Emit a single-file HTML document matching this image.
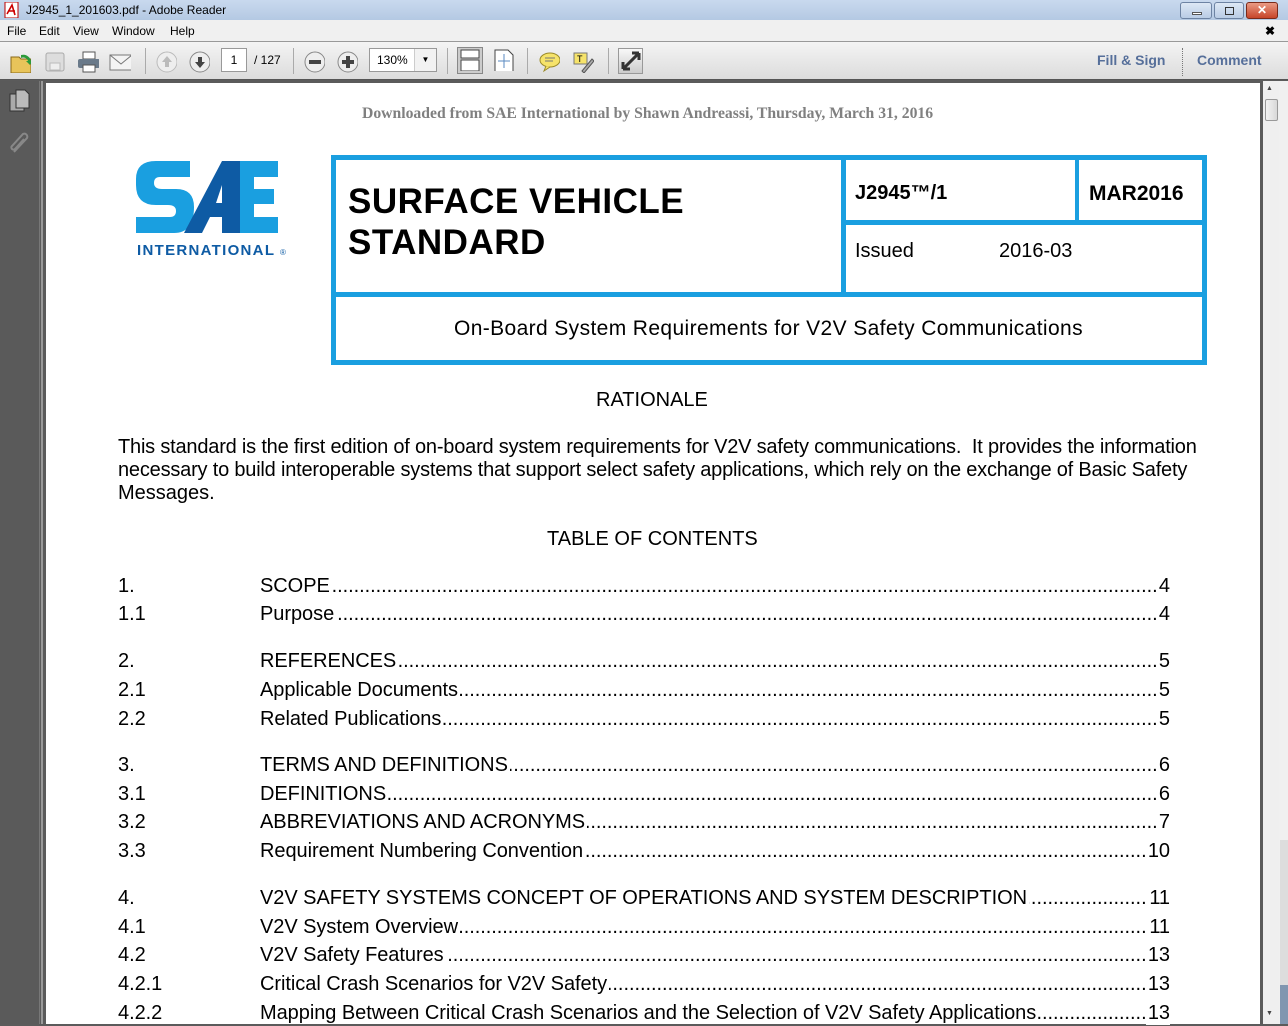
<!DOCTYPE html>
<html><head><meta charset="utf-8"><style>
*{margin:0;padding:0;box-sizing:border-box}
body{width:1288px;height:1024px;overflow:hidden;position:relative;font-family:"Liberation Sans",sans-serif;background:#5b5b5b}
.a{position:absolute}
#title{left:0;top:0;width:1288px;height:20px;background:linear-gradient(#c9d9ee,#b4c9e3);font-size:12px;color:#000;padding:3px 0 0 26px}
#menu{left:0;top:20px;width:1288px;height:22px;background:#f0f0f0;font-size:12px;border-bottom:1px solid #999}
#menu span{position:absolute;top:4px}
#tb{left:0;top:42px;width:1288px;height:38px;background:linear-gradient(#f4f4f4,#dcdcdc);border-bottom:1px solid #555}
.ic{position:absolute;top:9px;width:22px;height:22px}
.sep{position:absolute;top:6px;width:1px;height:26px;background:#aaa}
#page{left:46px;top:83px;width:1214px;height:941px;background:#fff}
.p{position:absolute;font-size:20px;color:#000;white-space:nowrap}
.row{position:absolute;left:118px;width:1052px;height:24px;font-size:20px;white-space:nowrap;letter-spacing:-0.05px}
.row .n{position:absolute;left:0}
.row .t{position:absolute;left:142px;right:0;overflow:hidden;z-index:0}
.row .t span{background:#fff;padding-right:2px;position:relative;z-index:1}
.row .t::after{content:"........................................................................................................................................................................................................................................................................................";position:absolute;left:0;z-index:-1}
.row .pg{position:absolute;right:0;background:#fff;padding-left:2px;z-index:2}
.bl{background:#1a9fe0;position:absolute}
</style></head><body>
<div id="title" class="a"><svg class="a" style="left:4px;top:2px" width="16" height="16"><rect x="1" y="0" width="13" height="16" fill="#fff" stroke="#b00"/><path d="M3 12 L8 3 L11 13 M4 9 H11" stroke="#c00" stroke-width="1.6" fill="none"/></svg>J2945_1_201603.pdf - Adobe Reader
<div class="a" style="left:1180px;top:2px;width:32px;height:17px;border:1px solid #6d83a3;border-radius:3px;background:linear-gradient(#dde8f5,#b9cce5)"><div class="a" style="left:11px;top:9px;width:10px;height:3px;background:#fff;border:1px solid #555"></div></div>
<div class="a" style="left:1214px;top:2px;width:30px;height:17px;border:1px solid #6d83a3;border-radius:3px;background:linear-gradient(#dde8f5,#b9cce5)"><div class="a" style="left:10px;top:4px;width:9px;height:8px;border:1px solid #333"></div></div>
<div class="a" style="left:1246px;top:2px;width:32px;height:17px;border:1px solid #7a2a1a;border-radius:3px;background:linear-gradient(#e99a84,#c7452a);color:#fff;font-size:12px;font-weight:bold;text-align:center;line-height:15px">✕</div>
</div>
<div id="menu" class="a"><span style="left:7px">File</span><span style="left:39px">Edit</span><span style="left:73px">View</span><span style="left:112px">Window</span><span style="left:170px">Help</span><span style="left:1265px;font-weight:bold">✖</span></div>
<div id="tb" class="a">
<svg class="ic" style="left:9px" width="26" height="24"><path d="M2 6h8l2 2h10v14H2z" fill="#e8c45a" stroke="#8a6a1a"/><path d="M12 4a8 8 0 0 1 10 6l2-1-3 5-4-4 2 0a5 5 0 0 0-7-3z" fill="#2a9a3a"/></svg>
<svg class="ic" style="left:44px" width="22" height="22"><rect x="2" y="2" width="18" height="18" rx="2" fill="#ddd" stroke="#aaa"/><rect x="6" y="12" width="10" height="7" fill="#eee" stroke="#bbb"/></svg>
<svg class="ic" style="left:77px" width="24" height="22"><rect x="6" y="1" width="12" height="7" fill="#fff" stroke="#555"/><rect x="1" y="8" width="22" height="9" rx="2" fill="#6a7a8a"/><rect x="6" y="14" width="12" height="7" fill="#fff" stroke="#555"/></svg>
<svg class="ic" style="left:109px" width="24" height="22"><rect x="1" y="4" width="22" height="15" fill="#f4f4f4" stroke="#777"/><path d="M1 4l11 9 11-9" stroke="#777" fill="none"/></svg>
<div class="sep" style="left:145px"></div>
<svg class="ic" style="left:155px" width="24" height="24"><circle cx="12" cy="11" r="10" fill="#eee" stroke="#bbb"/><path d="M12 5l5 6h-3v5h-4v-5H7z" fill="#bbb"/></svg>
<svg class="ic" style="left:188px" width="24" height="24"><circle cx="12" cy="11" r="10" fill="#eee" stroke="#888"/><path d="M12 17l5-6h-3V6h-4v5H7z" fill="#444"/></svg>
<div class="a" style="left:221px;top:6px;width:26px;height:24px;background:#fff;border:1px solid #999;font-size:12px;text-align:center;line-height:22px">1</div>
<div class="a" style="left:254px;top:11px;font-size:12px">/ 127</div>
<div class="sep" style="left:293px"></div>
<svg class="ic" style="left:303px" width="24" height="24"><circle cx="12" cy="11" r="10" fill="#eee" stroke="#888"/><rect x="6" y="9" width="12" height="4" fill="#444"/></svg>
<svg class="ic" style="left:336px" width="24" height="24"><circle cx="12" cy="11" r="10" fill="#eee" stroke="#888"/><path d="M6 9h4V5h4v4h4v4h-4v4h-4v-4H6z" fill="#444"/></svg>
<div class="a" style="left:369px;top:6px;width:68px;height:24px;background:#fff;border:1px solid #999;font-size:12px;line-height:22px;padding-left:7px">130%<div class="a" style="left:44px;top:0;width:22px;height:22px;border-left:1px solid #ccc;background:#f2f2f2;font-size:8px;text-align:center">▼</div></div>
<div class="sep" style="left:447px"></div>
<div class="a" style="left:457px;top:5px;width:26px;height:27px;background:#ccc;border:1px solid #888"></div>
<svg class="ic" style="left:460px;top:7px" width="20" height="24"><rect x="1" y="1" width="18" height="8" fill="#fff" stroke="#444"/><rect x="1" y="11" width="18" height="11" fill="#fff" stroke="#444"/></svg>
<svg class="ic" style="left:494px;top:7px" width="20" height="24"><path d="M1 1h13l5 5v17H1z" fill="#fff" stroke="#444"/><path d="M10 5v14M4 12h12" stroke="#5a8ac0"/></svg>
<div class="sep" style="left:527px"></div>
<svg class="ic" style="left:538px" width="24" height="22"><ellipse cx="12" cy="9" rx="10" ry="7" fill="#f6e36a" stroke="#9a8a2a"/><path d="M8 15l-2 5 6-4" fill="#f6e36a" stroke="#9a8a2a"/><path d="M7 7h10M7 10h8" stroke="#777"/></svg>
<svg class="ic" style="left:572px" width="24" height="22"><rect x="2" y="2" width="13" height="11" fill="#f6e36a" stroke="#777"/><text x="5" y="11" font-size="9" font-family="Liberation Sans">T</text><path d="M10 20l10-12 2 2-10 12z" fill="#aaa" stroke="#555"/></svg>
<div class="sep" style="left:608px"></div>
<div class="a" style="left:618px;top:6px;width:25px;height:26px;background:linear-gradient(#f8f8f8,#ccc);border:1px solid #999"></div>
<svg class="ic" style="left:620px;top:8px" width="22" height="22"><path d="M3 19L19 3M19 3h-7M19 3v7M3 19h7M3 19v-7" stroke="#333" stroke-width="3" fill="none"/></svg>
<div class="a" style="left:1097px;top:10px;font-size:14px;font-weight:bold;color:#566f9a">Fill &amp; Sign</div>
<div class="a" style="left:1182px;top:6px;width:0;height:28px;border-left:1px dotted #777"></div>
<div class="a" style="left:1197px;top:10px;font-size:14px;font-weight:bold;color:#566f9a">Comment</div>
</div>
<div class="a" style="left:0;top:81px;width:40px;height:943px;background:#5a5a5a;border-right:1px solid #777"></div>
<div class="a" style="left:41px;top:81px;width:2px;height:943px;background:#9a9a9a"></div>
<svg class="a" style="left:8px;top:88px" width="24" height="26"><rect x="2" y="6" width="14" height="17" fill="#aaa" stroke="#333"/><path d="M8 2h9l4 4v14H8z" fill="#bbb" stroke="#333"/></svg>
<svg class="a" style="left:8px;top:132px" width="24" height="24"><path d="M6 20L19 6a3 3 0 0 0-4-4L4 14a2 2 0 0 0 3 3l9-10" stroke="#888" stroke-width="2" fill="none"/></svg>
<div id="page" class="a">
<div class="p" style="left:316px;top:22px;font-family:'Liberation Serif',serif;font-size:15.7px;font-weight:bold;color:#808080">Downloaded from SAE International by Shawn Andreassi, Thursday, March 31, 2016</div>
<svg class="a" style="left:88px;top:74px" width="160" height="104">
<path d="M2 22 Q2 4 22 4 H56 V20 H26 Q20 20 20 26 Q20 32 28 32 H42 Q60 32 60 50 Q60 76 40 76 H2 V60 H36 Q42 60 42 54 Q42 48 34 48 H22 Q2 48 2 28Z" fill="#1a9fe0"/>
<path d="M88 4 H106 V76 H88 V60 H76 L68 76 H50 Z M88 28 L82 46 H88Z" fill="#0e5ba4"/>
<path d="M106 4 H144 V20 H120 V32 H140 V47 H120 V60 H144 V76 H106 Z" fill="#1a9fe0"/>
<text x="3" y="98" font-family="Liberation Sans" font-weight="bold" font-size="15" letter-spacing="1.3" fill="#0e5ba4">INTERNATIONAL</text><text x="146" y="98" font-size="8" fill="#0e5ba4">®</text>
</svg>
<div class="bl" style="left:285px;top:72px;width:876px;height:5px"></div>
<div class="bl" style="left:285px;top:277px;width:876px;height:5px"></div>
<div class="bl" style="left:285px;top:72px;width:5px;height:210px"></div>
<div class="bl" style="left:1156px;top:72px;width:5px;height:210px"></div>
<div class="bl" style="left:285px;top:209px;width:876px;height:5px"></div>
<div class="bl" style="left:795px;top:72px;width:5px;height:140px"></div>
<div class="bl" style="left:1029px;top:72px;width:4px;height:70px"></div>
<div class="bl" style="left:795px;top:137px;width:366px;height:5px"></div>
<div class="p" style="left:302px;top:98px;font-size:35px;font-weight:bold;line-height:41px;letter-spacing:0.5px">SURFACE VEHICLE<br>STANDARD</div>
<div class="p" style="left:809px;top:99px;font-weight:bold">J2945™/1</div>
<div class="p" style="left:1043px;top:99px;font-weight:bold;font-size:21px">MAR2016</div>
<div class="p" style="left:809px;top:157px">Issued</div>
<div class="p" style="left:953px;top:157px">2016-03</div>
<div class="p" style="left:408px;top:234px;font-size:21px;letter-spacing:0.38px">On-Board System Requirements for V2V Safety Communications</div>
<div class="p" style="left:550px;top:306px">RATIONALE</div>
<div class="p" style="left:72px;top:353px;letter-spacing:-0.2px">This standard is the first edition of on-board system requirements for V2V safety communications.&nbsp; It provides the information</div>
<div class="p" style="left:72px;top:376px;letter-spacing:-0.2px">necessary to build interoperable systems that support select safety applications, which rely on the exchange of Basic Safety</div>
<div class="p" style="left:72px;top:399px">Messages.</div>
<div class="p" style="left:501px;top:445px">TABLE OF CONTENTS</div>
</div>
<div class="a" style="left:46px;top:83px;width:1214px;height:941px;pointer-events:none">
<div class="row" style="left:72px;top:492px"><span class="n">1.</span><div class="t"><span>SCOPE</span></div><span class="pg">4</span></div>
<div class="row" style="left:72px;top:520px"><span class="n">1.1</span><div class="t"><span>Purpose </span></div><span class="pg">4</span></div>
<div class="row" style="left:72px;top:567px"><span class="n">2.</span><div class="t"><span>REFERENCES</span></div><span class="pg">5</span></div>
<div class="row" style="left:72px;top:596px"><span class="n">2.1</span><div class="t"><span>Applicable Documents </span></div><span class="pg">5</span></div>
<div class="row" style="left:72px;top:625px"><span class="n">2.2</span><div class="t"><span>Related Publications </span></div><span class="pg">5</span></div>
<div class="row" style="left:72px;top:671px"><span class="n">3.</span><div class="t"><span>TERMS AND DEFINITIONS </span></div><span class="pg">6</span></div>
<div class="row" style="left:72px;top:700px"><span class="n">3.1</span><div class="t"><span>DEFINITIONS </span></div><span class="pg">6</span></div>
<div class="row" style="left:72px;top:728px"><span class="n">3.2</span><div class="t"><span>ABBREVIATIONS AND ACRONYMS</span></div><span class="pg">7</span></div>
<div class="row" style="left:72px;top:757px"><span class="n">3.3</span><div class="t"><span>Requirement Numbering Convention</span></div><span class="pg">10</span></div>
<div class="row" style="left:72px;top:804px"><span class="n">4.</span><div class="t"><span>V2V SAFETY SYSTEMS CONCEPT OF OPERATIONS AND SYSTEM DESCRIPTION </span></div><span class="pg">11</span></div>
<div class="row" style="left:72px;top:833px"><span class="n">4.1</span><div class="t"><span>V2V System Overview </span></div><span class="pg">11</span></div>
<div class="row" style="left:72px;top:861px"><span class="n">4.2</span><div class="t"><span>V2V Safety Features</span></div><span class="pg">13</span></div>
<div class="row" style="left:72px;top:890px"><span class="n">4.2.1</span><div class="t"><span>Critical Crash Scenarios for V2V Safety </span></div><span class="pg">13</span></div>
<div class="row" style="left:72px;top:919px"><span class="n">4.2.2</span><div class="t"><span>Mapping Between Critical Crash Scenarios and the Selection of V2V Safety Applications</span></div><span class="pg">13</span></div>
</div>
<div class="a" style="left:1263px;top:81px;width:16px;height:943px;background:#efefef"></div>
<div class="a" style="left:1266px;top:85px;font-size:7px;color:#444">▲</div>
<div class="a" style="left:1265px;top:99px;width:13px;height:22px;background:linear-gradient(90deg,#f4f4f4,#d8d8d8);border:1px solid #999;border-radius:2px"></div>
<div class="a" style="left:1266px;top:1010px;font-size:7px;color:#444">▼</div>
<div class="a" style="left:1279px;top:81px;width:9px;height:943px;background:#f0f0f0"></div>
<div class="a" style="left:1280px;top:840px;width:8px;height:145px;background:#ddd"></div>
<div class="a" style="left:1280px;top:985px;width:8px;height:39px;background:#8096b0"></div>
</body></html>
